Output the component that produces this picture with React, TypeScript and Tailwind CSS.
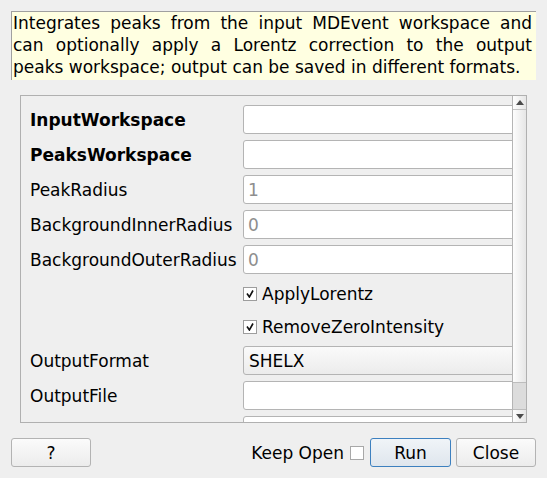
import React from "react";

const font = { fontFamily: '"DejaVu Sans", sans-serif' };

function TextRow({ label, bold, value }: { label: string; bold?: boolean; value?: string }) {
  return (
    <div className="flex h-[29px] shrink-0 items-center">
      <div className={`w-[213px] shrink-0 ${bold ? "font-bold" : ""}`}>{label}</div>
      <div className="flex h-[29px] w-[280px] shrink-0 items-center rounded-[3px] border border-[#b4b4b4] bg-white pl-[4px] text-[#8e8e8e]">
        {value ?? ""}
      </div>
    </div>
  );
}

function CheckRow({ label }: { label: string }) {
  return (
    <div className="flex h-[27px] shrink-0 items-center">
      <div className="w-[213px] shrink-0" />
      <div className="flex h-[14px] w-[14px] items-center justify-center border border-[#9d9d9d] bg-white">
        <svg width="8" height="8" viewBox="0 0 8 8">
          <path d="M1 3.5 L3.4 7 L7 0.5" fill="none" stroke="#111" strokeWidth="1.6" />
        </svg>
      </div>
      <div className="ml-[5px]">{label}</div>
    </div>
  );
}

export default function App() {
  return (
    <div className="h-[478px] w-[547px] overflow-hidden bg-[#efefef] text-[17px] leading-[22px] text-black" style={font}>
      <div className="ml-[11px] mt-[11px] h-[69px] w-[525px] border-l border-t border-[#a0a0a0] bg-[#ffffe1] pl-[1px] pr-[4px]">
        <div className="text-justify [text-align-last:justify]">Integrates peaks from the input MDEvent workspace and</div>
        <div className="text-justify [text-align-last:justify]">can optionally apply a Lorentz correction to the output</div>
        <div>peaks workspace; output can be saved in different formats.</div>
      </div>

      <div className="ml-[20px] mt-[15px] flex h-[328px] w-[507px] border border-[#b0b0b0]">
        <div className="flex w-[491px] flex-col gap-[6px] overflow-hidden pl-[9px] pt-[9px]">
          <TextRow label="InputWorkspace" bold />
          <TextRow label="PeaksWorkspace" bold />
          <TextRow label="PeakRadius" value="1" />
          <TextRow label="BackgroundInnerRadius" value="0" />
          <TextRow label="BackgroundOuterRadius" value="0" />
          <CheckRow label="ApplyLorentz" />
          <CheckRow label="RemoveZeroIntensity" />
          <div className="flex h-[29px] shrink-0 items-center">
            <div className="w-[213px] shrink-0">OutputFormat</div>
            <div className="flex h-[29px] w-[280px] shrink-0 items-center rounded-[3px] border border-[#b4b4b4] bg-gradient-to-b from-[#fafafa] to-[#ececec] pl-[5px]">
              SHELX
            </div>
          </div>
          <TextRow label="OutputFile" />
          <TextRow label="" />
        </div>
        <div className="flex w-[14px] flex-col border-l border-[#b5b5b5] bg-gradient-to-r from-[#fdfdfd] to-[#e6e6e6]">
          <div className="flex h-[14px] items-center justify-center border-b border-[#c4c4c4]">
            <svg width="8" height="5" viewBox="0 0 8 5">
              <path d="M0 5 L4 0 L8 5 Z" fill="#4a4a4a" />
            </svg>
          </div>
          <div className="flex-1" />
          <div className="h-[28px] border-y border-[#bdbdbd] bg-[#dcdcdc]" />
          <div className="flex h-[12px] items-center justify-center">
            <svg width="8" height="5" viewBox="0 0 8 5">
              <path d="M0 0 L8 0 L4 5 Z" fill="#4a4a4a" />
            </svg>
          </div>
        </div>
      </div>

      <div className="ml-[11px] mt-[15px] flex h-[29px] w-[525px] items-center">
        <button className="h-[29px] w-[80px] rounded-[3px] border border-[#b3b3b3] bg-gradient-to-b from-[#fbfbfb] to-[#ececec]">?</button>
        <div className="flex-1" />
        <span>Keep Open</span>
        <div className="ml-[6px] h-[14px] w-[14px] border border-[#a8a8a8] bg-white" />
        <button className="ml-[6px] h-[29px] w-[81px] rounded-[3px] border border-[#3d80bf] bg-gradient-to-b from-[#f0f4f8] to-[#dfe6ed]">Run</button>
        <button className="ml-[5px] h-[29px] w-[80px] rounded-[3px] border border-[#b3b3b3] bg-gradient-to-b from-[#fbfbfb] to-[#ececec]">Close</button>
      </div>
    </div>
  );
}
